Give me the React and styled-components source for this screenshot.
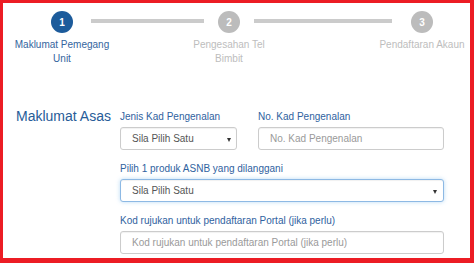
import React from 'react'
import styled, { createGlobalStyle } from 'styled-components'

const GlobalStyle = createGlobalStyle`
  * { box-sizing: border-box; }
  html, body { margin: 0; padding: 0; background: #ffffff; }
  body { font-family: "Liberation Sans", Arial, sans-serif; }
`

function App() {
    return (
        <>
            <GlobalStyle />
            <Frame>
                <Stepper>
                    <Step>
                        <Circle $active>1</Circle>
                        <StepLabel $active>Maklumat Pemegang Unit</StepLabel>
                    </Step>
                    <Connector $grow={113} $left={-19} $right={-23} />
                    <Step>
                        <Circle>2</Circle>
                        <StepLabel>Pengesahan Tel Bimbit</StepLabel>
                    </Step>
                    <Connector $grow={138} $left={-23} $right={-18} />
                    <Step>
                        <Circle>3</Circle>
                        <StepLabel>Pendaftaran Akaun</StepLabel>
                    </Step>
                </Stepper>

                <Section>
                    <Title>Maklumat Asas</Title>
                    <Fields>
                        <Group>
                            <Label>Jenis Kad Pengenalan</Label>
                            <Select $arrowRight={5}>Sila Pilih Satu</Select>
                        </Group>
                        <Group>
                            <Label>No. Kad Pengenalan</Label>
                            <Input placeholder="No. Kad Pengenalan" />
                        </Group>
                        <Group $wide>
                            <Label>Pilih 1 produk ASNB yang dilanggani</Label>
                            <Select $focused $arrowRight={6}>Sila Pilih Satu</Select>
                        </Group>
                        <Group $wide>
                            <Label>Kod rujukan untuk pendaftaran Portal (jika perlu)</Label>
                            <Input placeholder="Kod rujukan untuk pendaftaran Portal (jika perlu)" />
                        </Group>
                    </Fields>
                </Section>
            </Frame>
        </>
    )
}

export default App

const Frame = styled.div`
    width: 474px;
    height: 263px;
    overflow: hidden;
    background: #ffffff;
    border-style: solid;
    border-color: #ec1c24;
    border-width: 3px 4px 5px 3px;
`

const Stepper = styled.div`
    display: flex;
    align-items: flex-start;
    padding: 8px 0 0 11px;
`

const Step = styled.div`
    width: 96px;
    flex-shrink: 0;
    display: flex;
    flex-direction: column;
    align-items: center;
`

const Circle = styled.div`
    width: 22px;
    height: 22px;
    border-radius: 50%;
    background: ${p => p.$active ? '#1c5b9b' : '#bcbcbc'};
    color: #ffffff;
    font-size: 10px;
    font-weight: bold;
    display: flex;
    align-items: center;
    justify-content: center;
`

const StepLabel = styled.div`
    margin-top: 5px;
    font-size: 10px;
    line-height: 14px;
    text-align: center;
    color: ${p => p.$active ? '#34659e' : '#bdbdbd'};
`

const Connector = styled.div`
    flex: ${p => p.$grow} 1 0;
    height: 4px;
    margin-top: 8px;
    margin-left: ${p => p.$left}px;
    margin-right: ${p => p.$right}px;
    background: #cbcbcb;
`

const Section = styled.div`
    display: flex;
    align-items: flex-start;
    margin-top: 44px;
    padding-left: 13px;
`

const Title = styled.div`
    width: 104px;
    margin-top: -2px;
    font-size: 14px;
    line-height: 16px;
    color: #275c98;
`

const Fields = styled.div`
    width: 324px;
    display: grid;
    grid-template-columns: 117px 186px;
    column-gap: 21px;
    row-gap: 12px;
`

const Group = styled.div`
    grid-column: ${p => p.$wide ? '1 / -1' : 'auto'};
    display: flex;
    flex-direction: column;
`

const Label = styled.div`
    font-size: 10px;
    line-height: 13px;
    margin-bottom: 4px;
    color: #2f62a0;
    white-space: nowrap;
`

const Select = styled.div`
    position: relative;
    height: 23px;
    padding: 0 11px;
    display: flex;
    align-items: center;
    font-size: 10px;
    color: #555555;
    background: #ffffff;
    border: 1px solid ${p => p.$focused ? '#8db9e4' : '#cccccc'};
    border-radius: 3px;
    box-shadow: ${p => p.$focused
        ? 'inset 0 1px 1px rgba(0,0,0,.06), 0 0 4px rgba(102,175,233,.45)'
        : 'inset 0 1px 1px rgba(0,0,0,.06)'};

    &::after {
        content: '';
        position: absolute;
        right: ${p => p.$arrowRight}px;
        top: 10px;
        border-left: 2.5px solid transparent;
        border-right: 2.5px solid transparent;
        border-top: 4px solid #333333;
    }
`

const Input = styled.input`
    height: 23px;
    padding: 0 11px;
    font-family: "Liberation Sans", Arial, sans-serif;
    font-size: 10px;
    color: #555555;
    background: #ffffff;
    border: 1px solid #cccccc;
    border-radius: 3px;
    box-shadow: inset 0 1px 1px rgba(0,0,0,.06);
    outline: none;

    &::placeholder {
        color: #9a9a9a;
    }
`
